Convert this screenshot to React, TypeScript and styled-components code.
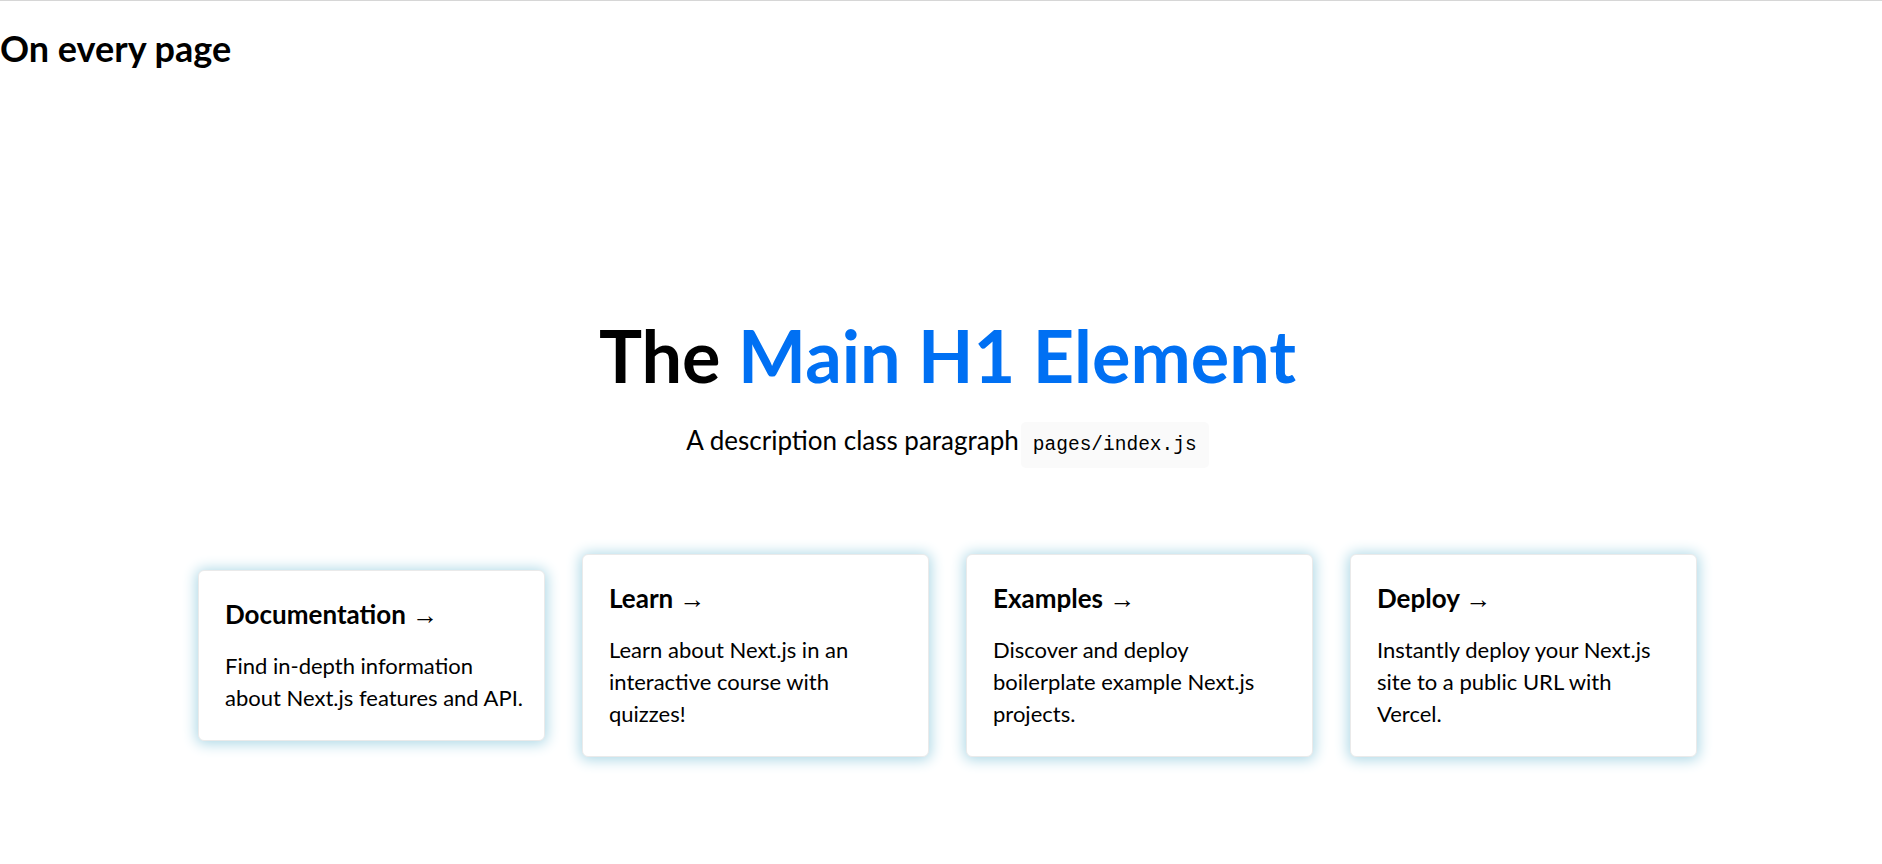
import styled, { createGlobalStyle } from "styled-components";

const GlobalStyle = createGlobalStyle`
  html, body {
    margin: 0;
    padding: 0;
    background: #fff;
    color: #000;
    font-family: Lato, "Noto Sans", Arial, sans-serif;
  }
  * {
    box-sizing: border-box;
  }
`;

const cards = [
  {
    title: "Documentation",
    text: "Find in-depth information\nabout Next.js features and API.",
  },
  {
    title: "Learn",
    text: "Learn about Next.js in an\ninteractive course with\nquizzes!",
  },
  {
    title: "Examples",
    text: "Discover and deploy\nboilerplate example Next.js\nprojects.",
  },
  {
    title: "Deploy",
    text: "Instantly deploy your Next.js\nsite to a public URL with\nVercel.",
  },
];

const App = () => {
  return (
    <Page>
      <GlobalStyle />
      <Header>On every page</Header>
      <Main>
        <Title>
          The <Accent>Main H1 Element</Accent>
        </Title>
        <Description>
          A description class paragraph<Code>pages/index.js</Code>
        </Description>
        <Grid>
          {cards.map((card) => (
            <Card key={card.title}>
              <CardTitle>
                {card.title} <Arrow>&rarr;</Arrow>
              </CardTitle>
              <CardText>{card.text}</CardText>
            </Card>
          ))}
        </Grid>
      </Main>
    </Page>
  );
};

const Page = styled.div`
  min-height: 100vh;
  border-top: 1px solid #d6d6d6;
  padding-top: 25px;
`;

const Header = styled.h2`
  margin: 0;
  font-size: 36px;
  line-height: 44px;
  font-weight: 700;
`;

const Main = styled.main`
  display: flex;
  flex-direction: column;
  align-items: center;
  padding-left: 13px;
`;

const Title = styled.h1`
  margin: 245px 0 0;
  font-size: 72px;
  line-height: 80px;
  font-weight: 700;
  text-align: center;
`;

const Accent = styled.span`
  color: #0070f3;
`;

const Description = styled.p`
  margin: 27px 0 0;
  font-size: 26px;
  line-height: 36px;
  text-align: center;
`;

const Code = styled.code`
  background: #fafafa;
  border-radius: 5px;
  padding: 12px;
  margin-left: 2px;
  font-size: 19.5px;
  line-height: 1;
  font-family: "Liberation Mono", "DejaVu Sans Mono", monospace;
`;

const Grid = styled.div`
  display: flex;
  align-items: center;
  gap: 37px;
  margin-top: 96px;
`;

const Card = styled.div`
  width: 347px;
  padding: 26px 20px 26px 26px;
  background: #fff;
  border: 1px solid #eaeaea;
  border-radius: 6px;
  box-shadow: 0 1px 14px 2px #add8e6;
  text-align: left;
`;

const CardTitle = styled.h2`
  margin: 0 0 18px;
  font-size: 26px;
  line-height: 34px;
  font-weight: 700;
`;

const Arrow = styled.span`
  font-family: "Liberation Sans", "DejaVu Sans", sans-serif;
  font-weight: 400;
`;

const CardText = styled.p`
  margin: 0;
  font-size: 22px;
  line-height: 32px;
  white-space: pre-line;
`;

export default App;
